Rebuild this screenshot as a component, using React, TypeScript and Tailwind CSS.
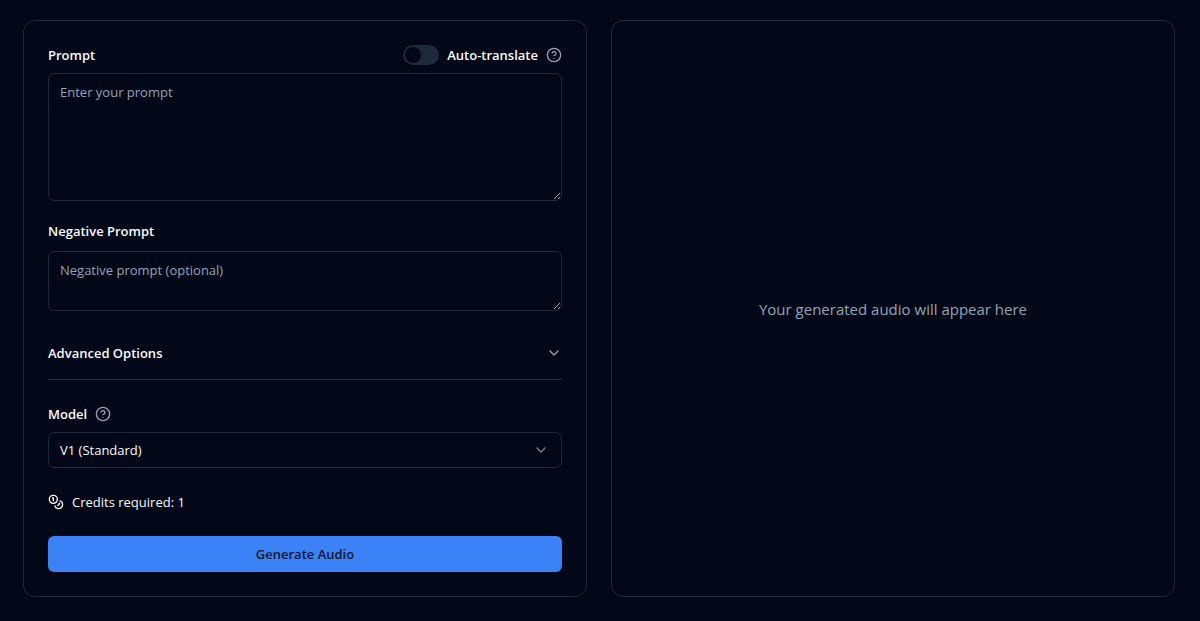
import { useState } from 'react';
import { ChevronDown, CircleHelp, Coins } from 'lucide-react';

const field = 'block w-full rounded-md border border-[#1e293b] bg-transparent px-[11px] text-[13px] text-slate-50 placeholder:text-[#94a3b8]';

function Help({ label }: { label: string }) {
  return (
    <button type="button" aria-label={label} className="text-[#94a3b8]">
      <CircleHelp className="size-4" />
    </button>
  );
}

export default function App() {
  const [translate, setTranslate] = useState(false);
  const [open, setOpen] = useState(false);
  return (
    <main className="grid min-h-screen grid-cols-2 gap-6 bg-[#020817] pt-5 pr-[25px] pb-6 pl-[23px] font-['Open_Sans','Noto_Sans',sans-serif] text-[13px] leading-5 text-slate-50">
      <form className="flex flex-col gap-6 rounded-xl border border-[#1e293b] p-6" onSubmit={e => e.preventDefault()}>
        <div className="flex flex-col gap-2">
          <div className="flex items-center justify-between">
            <label htmlFor="prompt" className="font-semibold">Prompt</label>
            <div className="flex items-center gap-2">
              <button type="button" id="translate" role="switch" aria-checked={translate} onClick={() => setTranslate(!translate)} className="flex h-5 w-9 items-center rounded-full bg-[#1e293b] p-0.5 aria-checked:justify-end aria-checked:bg-[#3b82f6]">
                <span className="size-4 rounded-full bg-[#020817]" />
              </button>
              <label htmlFor="translate" className="font-semibold">Auto-translate</label>
              <Help label="About auto-translate" />
            </div>
          </div>
          <textarea id="prompt" placeholder="Enter your prompt" className={`${field} h-32 py-2`} />
        </div>
        <div className="flex flex-col gap-3.5">
          <label htmlFor="negative" className="leading-3 font-semibold">Negative Prompt</label>
          <textarea id="negative" placeholder="Negative prompt (optional)" className={`${field} h-15 py-2`} />
        </div>
        <div className="-mt-2 border-b border-[#1e293b]">
          <button type="button" aria-expanded={open} onClick={() => setOpen(!open)} className="flex w-full items-center justify-between py-4 font-semibold">
            Advanced Options
            <ChevronDown className="size-4 text-[#94a3b8]" />
          </button>
        </div>
        <div className="flex flex-col gap-2">
          <div className="flex items-center gap-2">
            <label htmlFor="model" className="font-semibold">Model</label>
            <Help label="About models" />
          </div>
          <div className="relative">
            <select id="model" className={`${field} h-9 appearance-none`}>
              <option>V1 (Standard)</option>
            </select>
            <ChevronDown className="pointer-events-none absolute top-2.5 right-[13px] size-4 opacity-50" />
          </div>
        </div>
        <div className="flex items-center gap-2">
          <Coins className="size-4" />
          <span>Credits required: 1</span>
        </div>
        <button type="submit" className="h-9 rounded-md bg-[#3b82f6] font-semibold text-[#0f172a]">Generate Audio</button>
      </form>
      <section className="flex items-center justify-center rounded-xl border border-[#1e293b] p-6">
        <p className="text-[15px] leading-6 text-[#94a3b8]">Your generated audio will appear here</p>
      </section>
    </main>
  );
}
